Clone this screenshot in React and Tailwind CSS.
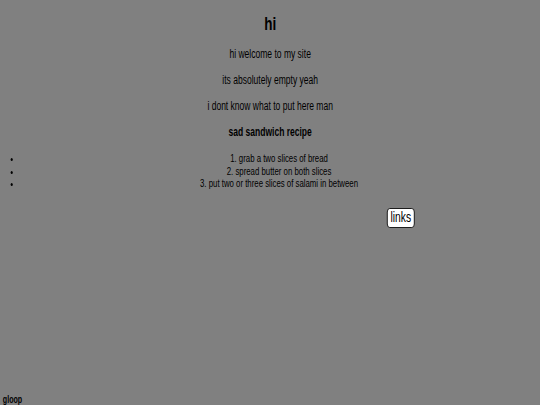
export default function App() {
  return (
    <div className="w-[540px] h-[405px] overflow-hidden bg-[#808080] text-black font-['Liberation_Sans',Arial,sans-serif]">
      <div className="w-[761px] h-[405px] origin-top-left scale-x-[0.71] flex flex-col">
        <h1 className="mt-[13px] text-center text-[19px] leading-[22px] font-bold">hi</h1>
        <p className="mt-[12px] text-center text-[12px] leading-[14px]">hi welcome to my site</p>
        <p className="mt-[12px] text-center text-[12px] leading-[14px]">its absolutely empty yeah</p>
        <p className="mt-[12px] text-center text-[12px] leading-[14px]">i dont know what to put here man</p>
        <p className="mt-[12px] text-center text-[12px] leading-[14px] font-bold">sad sandwich recipe</p>
        <ul className="mt-[13px] list-disc pl-[28px] pr-[3px] text-center text-[11px] leading-[12.7px]">
          <li>1. grab a two slices of bread</li>
          <li>2. spread butter on both slices</li>
          <li>3. put two or three slices of salami in between</li>
        </ul>
        <div className="mt-[18px] pl-[545px] flex">
          <button className="bg-white text-black border border-black rounded-[4px] px-[4px] text-[14.5px] leading-[17.5px]">
            links
          </button>
        </div>
        <div className="mt-auto pl-[4px] text-[10px] leading-[11px] font-bold">gloop</div>
      </div>
    </div>
  );
}
